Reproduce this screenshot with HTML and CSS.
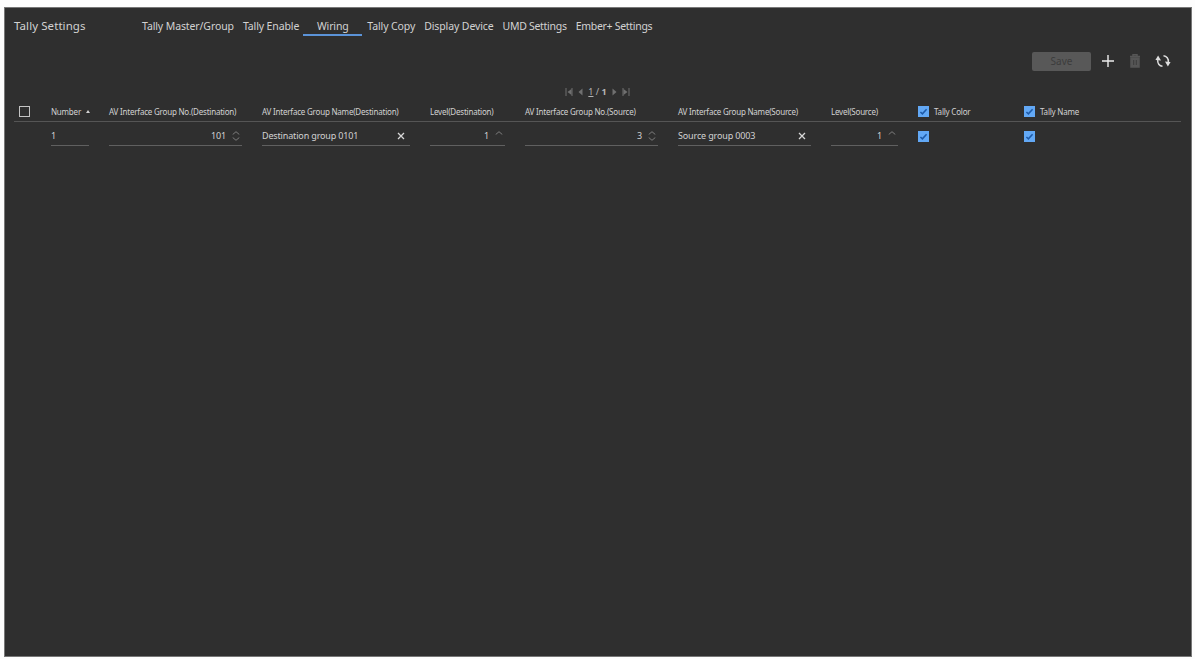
FILE: index.html
```html
<!DOCTYPE html>
<html lang="en">
<head>
<meta charset="UTF-8">
<meta name="viewport" content="width=device-width, initial-scale=1.0">
<title>Tally Settings</title>
<link rel="stylesheet" href="styles.css">
</head>
<body>
<!-- shared icons -->
<svg width="0" height="0" class="defs">
  <symbol id="i-up" viewBox="0 0 8 4"><path d="M.7 3.5L4 .7l3.3 2.8"/></symbol>
  <symbol id="i-down" viewBox="0 0 8 4"><path d="M.7 .5L4 3.3 7.3 .5"/></symbol>
  <symbol id="i-x" viewBox="0 0 8 8"><path d="M1 1l6 6M7 1L1 7"/></symbol>
  <symbol id="i-check" viewBox="0 0 10 10"><path d="M2.2 5.4l1.8 1.7L7.8 3"/></symbol>
</svg>

<div class="panel">
  <header class="top">
    <h1>Tally Settings</h1>
    <nav class="tabs">
      <a>Tally Master/Group</a>
      <a>Tally Enable</a>
      <a class="active">Wiring</a>
      <a>Tally Copy</a>
      <a>Display Device</a>
      <a class="tight">UMD Settings</a>
      <a class="tight">Ember+ Settings</a>
    </nav>
  </header>

  <div class="toolbar">
    <button class="save" disabled>Save</button>
    <svg class="add" viewBox="0 0 14 14"><path d="M7 1v12M1 7h12"/></svg>
    <svg class="trash" viewBox="0 0 12 14"><path d="M1 2.5h10M4 2V.8h4V2"/><path class="can" d="M2 4h8v9H2z"/><path class="slots" d="M4.7 6v5M7.3 6v5"/></svg>
    <svg class="sync" viewBox="0 0 16 14"><path d="M8.5 1.7A5.3 5.3 0 0 1 13.2 8M7.5 12.3A5.3 5.3 0 0 1 2.8 6"/><path class="head-tip" d="M10 7.6l5.6.3-2.7 4.6zM6 6.4L.4 6.1l2.7-4.6z"/></svg>
  </div>

  <div class="pager">
    <svg viewBox="0 0 8 8"><path d="M1 0v8M7 0v8"/><path class="fill" d="M6.5 1v6L2.5 4z"/></svg>
    <svg class="arrow" viewBox="0 0 5 8"><path class="fill" d="M4.5 .5v7L.5 4z"/></svg>
    <span class="page"><u>1</u> / <b>1</b></span>
    <svg class="arrow" viewBox="0 0 5 8"><path class="fill" d="M.5 .5v7l4-3.5z"/></svg>
    <svg viewBox="0 0 8 8"><path d="M1 0v8M7 0v8"/><path class="fill" d="M1.5 1v6l4-3z"/></svg>
  </div>

  <div class="row head">
    <span class="check off"></span>
    <span>Number <i class="sort"></i></span>
    <span>AV Interface Group No.(Destination)</span>
    <span>AV Interface Group Name(Destination)</span>
    <span>Level(Destination)</span>
    <span>AV Interface Group No.(Source)</span>
    <span>AV Interface Group Name(Source)</span>
    <span>Level(Source)</span>
    <span class="opt"><svg class="check"><use href="#i-check"/></svg>Tally Color</span>
    <span class="opt"><svg class="check"><use href="#i-check"/></svg>Tally Name</span>
  </div>

  <div class="row data">
    <span></span>
    <div class="field">1</div>
    <div class="field num">101 <span class="spin"><svg><use href="#i-up"/></svg><svg><use href="#i-down"/></svg></span></div>
    <div class="field name"><span>Destination group 0101</span><svg class="clear"><use href="#i-x"/></svg></div>
    <div class="field num">1 <span class="spin"><svg><use href="#i-up"/></svg></span></div>
    <div class="field num">3 <span class="spin"><svg><use href="#i-up"/></svg><svg><use href="#i-down"/></svg></span></div>
    <div class="field name"><span>Source group 0003</span><svg class="clear"><use href="#i-x"/></svg></div>
    <div class="field num">1 <span class="spin"><svg><use href="#i-up"/></svg></span></div>
    <svg class="check"><use href="#i-check"/></svg>
    <svg class="check"><use href="#i-check"/></svg>
  </div>
</div>
</body>
</html>
```
FILE: styles.css
```css
:root { --bg:#2f2f2f; --text:#d2d2d2; --line:#555; --blue:#62a8f5; }
* { box-sizing:border-box; margin:0; padding:0; }
body {
  background:#fdfdfd; color:var(--text); height:659px; overflow:hidden;
  font-family:"Noto Sans","Open Sans",sans-serif; font-size:9px;
  padding:7px 3px 2px 4px;
}
svg { display:block; fill:none; stroke:currentColor; }
.defs { position:absolute; }
.panel { height:650px; background:var(--bg); border:1px solid #777; padding:0 10px 0 9px; }

.top { display:flex; height:37px; padding-top:9px; line-height:18px; white-space:nowrap; }
.top h1 { width:128px; font-size:11.5px; font-weight:400; letter-spacing:.08px; }
.tabs { display:flex; gap:9px; font-size:10.5px; letter-spacing:-.11px; }
.tabs a { height:19px; }
.tabs .tight { letter-spacing:-.29px; }
.tabs .active {
  width:59px; margin:0 -4px 0 -5px; text-align:center;
  border-bottom:2px solid #5b93d8;
}

.toolbar { display:flex; align-items:center; height:32px; padding-right:10px; }
.save {
  width:59px; height:19px; margin-left:auto; border:0; border-radius:2px;
  background:#585858; color:#3c3c3c; font:10px "Noto Sans",sans-serif;
}
.add { width:14px; height:14px; margin-left:10px; color:#ededed; stroke-width:1.4; }
.trash { width:12px; height:14px; margin-left:14px; color:#565656; stroke-width:1.5; }
.trash .can { fill:#565656; }
.trash .slots { stroke:#3c3c3c; stroke-width:1; }
.sync { width:16px; height:14px; margin-left:14px; color:#dedede; stroke-width:1.5; }
.sync .head-tip { fill:currentColor; stroke:none; }

.pager {
  display:flex; align-items:center; justify-content:center; gap:5px;
  height:24px; padding:5px 0 0 0; color:#707070;
}
.pager svg { width:8px; height:8px; }
.pager .arrow { width:5px; }
.pager .fill { fill:currentColor; stroke:none; }
.page { color:#b5b5b5; line-height:12px; }

.row {
  display:grid; align-items:center; padding-left:5px; white-space:nowrap;
  grid-template-columns:32px 58px 153px 168px 95px 153px 153px 87px 106px 1fr;
}
.head { height:21px; border-bottom:1px solid var(--line); padding-top:1px; font-size:8px; letter-spacing:-.21px; }
.sort {
  display:inline-block; margin:0 0 2px 3px; border:2px solid transparent;
  border-top:0; border-bottom:3px solid var(--text);
}
.opt { display:flex; align-items:center; gap:5px; }
.check { width:11px; height:11px; background:var(--blue); color:#1d5aa8; stroke-width:1.4; }
.check.off { background:none; border:1px solid #c4c4c4; }

.data { height:27px; padding-top:1px; }
.field {
  display:flex; align-items:center; height:19px; letter-spacing:-.15px;
  margin-right:20px; border-bottom:1px solid #606060;
}
.data .check { margin-top:1px; }
.num { justify-content:flex-end; padding-right:2px; }
.name { justify-content:space-between; padding-right:5px; }
.spin { display:grid; align-content:space-between; height:10px; margin-left:6px; color:#7c7c7c; }
.spin svg { width:8px; height:4px; }
.clear { width:8px; height:8px; color:#d8d8d8; stroke-width:1.3; }
```
